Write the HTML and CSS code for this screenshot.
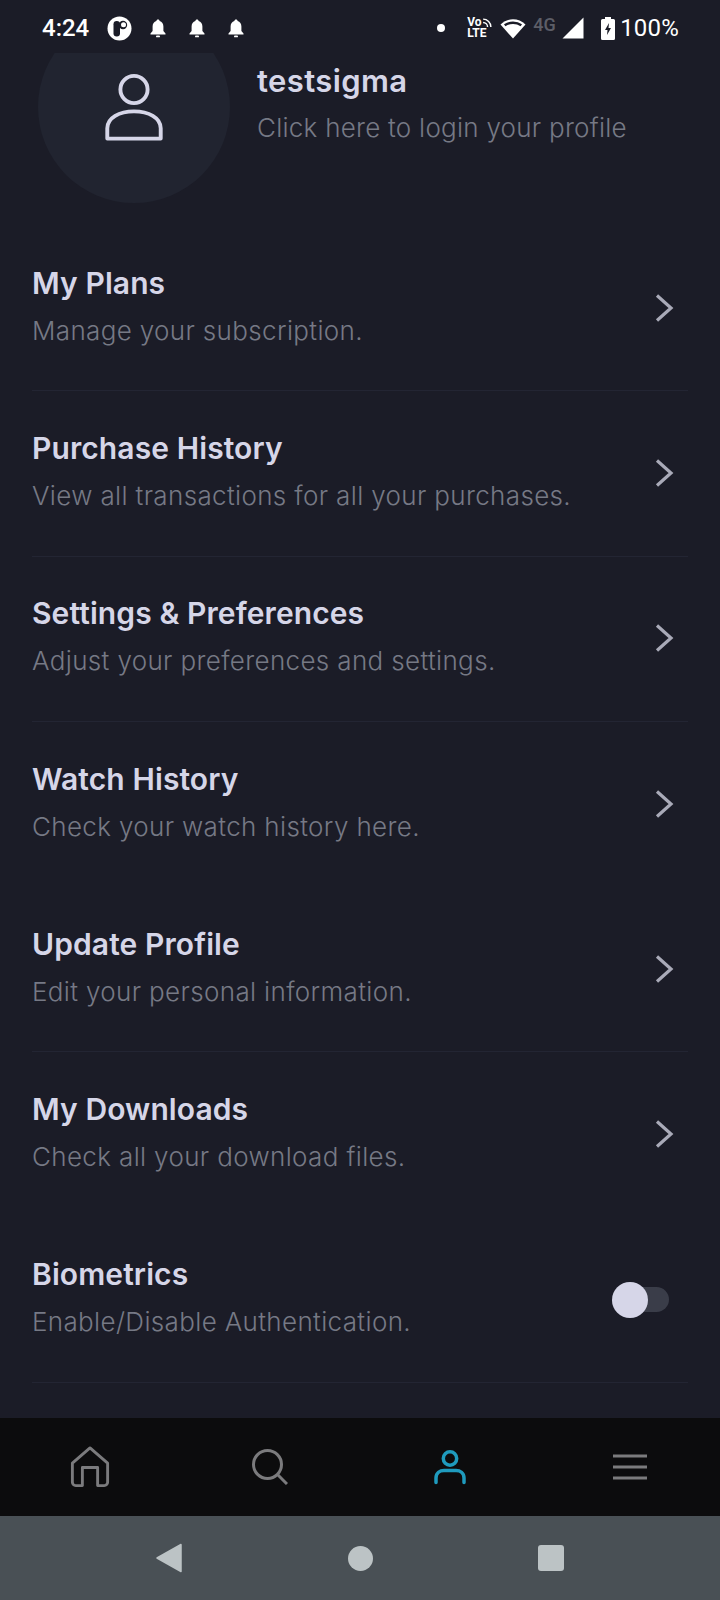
FILE: index.html
```html
<!DOCTYPE html>
<html lang="en">
<head>
  <meta charset="UTF-8">
  <meta name="viewport" content="width=device-width, initial-scale=1.0">
  <title>Profile</title>
  <link rel="stylesheet" href="styles.css">
</head>
<body>
  <div class="status-bar">
    <div class="status-left">
      <span class="clock">4:24</span>
      <svg class="app-badge" width="25" height="25" viewBox="0 0 25 25"><circle cx="12.5" cy="12.5" r="12" fill="#fff"/><rect x="6.500" y="5" width="6.500" height="15.500" rx="3.200" fill="#1b1c27"/><circle cx="16" cy="9" r="4.200" fill="#1b1c27"/><circle cx="16.500" cy="8.800" r="2.500" fill="#fff"/></svg>
      <svg class="bell" width="16" height="19" viewBox="0 0 16 19"><path d="M8 0.5c1 0 1.6 .7 1.6 1.6C12 2.900 13.400 5 13.400 7.500v4.500L15.500 14.500v1H.5v-1L2.600 12V7.500C2.600 5 4 2.900 6.400 2.100 6.400 1.200 7 .5 8 .5z" fill="#fff"/><rect x="6" y="16.500" width="4" height="1.800" rx=".9" fill="#fff"/></svg>
      <svg class="bell" width="16" height="19" viewBox="0 0 16 19"><path d="M8 0.5c1 0 1.6 .7 1.6 1.6C12 2.900 13.400 5 13.400 7.500v4.500L15.500 14.500v1H.5v-1L2.600 12V7.500C2.600 5 4 2.900 6.400 2.100 6.400 1.200 7 .5 8 .5z" fill="#fff"/><rect x="6" y="16.500" width="4" height="1.800" rx=".9" fill="#fff"/></svg>
      <svg class="bell" width="16" height="19" viewBox="0 0 16 19"><path d="M8 0.5c1 0 1.6 .7 1.6 1.6C12 2.900 13.400 5 13.400 7.500v4.500L15.500 14.500v1H.5v-1L2.600 12V7.500C2.600 5 4 2.900 6.400 2.100 6.400 1.200 7 .5 8 .5z" fill="#fff"/><rect x="6" y="16.500" width="4" height="1.800" rx=".9" fill="#fff"/></svg>
    </div>
    <div class="status-right">
      <span class="dot"></span>
      <span class="volte">
        <span class="volte-top">Vo<svg width="10" height="10" viewBox="0 0 9 9"><path d="M1 1a7 7 0 0 1 7 7M1 4a4 4 0 0 1 4 4" fill="none" stroke="#fff" stroke-width="1.300"/></svg></span>
        <span>LTE</span>
      </span>
      <svg class="wifi" width="26" height="22" viewBox="0 0 26 22"><path d="M13 21.500 .5 7.500C7.500 .5 18.500 .5 25.500 7.500z" fill="#fff"/><path d="M4.700 8.300C9.500 4.800 16.500 4.800 21.300 8.300" fill="none" stroke="#1b1c27" stroke-width="2.400"/></svg>
      <span class="net">4G</span>
      <svg class="signal" width="22" height="22" viewBox="0 0 22 22"><path d="M21.500 .5V21.500H.5z" fill="#fff"/></svg>
      <svg class="battery" width="14" height="23" viewBox="0 0 14 23"><path d="M4 0h6v2h2.500A1.500 1.500 0 0 1 14 3.500v18a1.500 1.500 0 0 1-1.500 1.500h-11A1.500 1.500 0 0 1 0 21.500v-18A1.500 1.500 0 0 1 1.500 2H4z" fill="#fff"/><path d="M8 6 4 13h2.500L6 18l4-7H7.500z" fill="#1b1c27"/></svg>
      <span class="percent">100%</span>
    </div>
  </div>

  <main class="content">
    <section class="profile">
      <div class="avatar">
        <svg width="62" height="68" viewBox="0 0 62 70" fill="none" stroke="#d6d6e8" stroke-width="4"><circle cx="31" cy="17" r="14"/><path d="M3.500 67.500V57C3.500 46 16 39.500 31 39.500S58.500 46 58.500 57V67.500z" stroke-linejoin="round"/></svg>
      </div>
      <div class="profile-text">
        <div class="profile-name">testsigma</div>
        <div class="profile-hint">Click here to login your profile</div>
      </div>
    </section>

    <ul class="menu">
      <li class="menu-row">
        <div class="menu-text"><div class="menu-title">My Plans</div><div class="menu-sub">Manage your subscription.</div></div>
        <svg class="chevron" width="20" height="30" viewBox="0 0 20 30"><path d="M3 2.500 17 15 3 27.500" fill="none" stroke="#a9aab8" stroke-width="3.200"/></svg>
      </li>
      <li class="menu-row">
        <div class="menu-text"><div class="menu-title">Purchase History</div><div class="menu-sub">View all transactions for all your purchases.</div></div>
        <svg class="chevron" width="20" height="30" viewBox="0 0 20 30"><path d="M3 2.500 17 15 3 27.500" fill="none" stroke="#a9aab8" stroke-width="3.200"/></svg>
      </li>
      <li class="menu-row">
        <div class="menu-text"><div class="menu-title">Settings &amp; Preferences</div><div class="menu-sub">Adjust your preferences and settings.</div></div>
        <svg class="chevron" width="20" height="30" viewBox="0 0 20 30"><path d="M3 2.500 17 15 3 27.500" fill="none" stroke="#a9aab8" stroke-width="3.200"/></svg>
      </li>
      <li class="menu-row no-line">
        <div class="menu-text"><div class="menu-title">Watch History</div><div class="menu-sub">Check your watch history here.</div></div>
        <svg class="chevron" width="20" height="30" viewBox="0 0 20 30"><path d="M3 2.500 17 15 3 27.500" fill="none" stroke="#a9aab8" stroke-width="3.200"/></svg>
      </li>
      <li class="menu-row">
        <div class="menu-text"><div class="menu-title">Update Profile</div><div class="menu-sub">Edit your personal information.</div></div>
        <svg class="chevron" width="20" height="30" viewBox="0 0 20 30"><path d="M3 2.500 17 15 3 27.500" fill="none" stroke="#a9aab8" stroke-width="3.200"/></svg>
      </li>
      <li class="menu-row no-line">
        <div class="menu-text"><div class="menu-title">My Downloads</div><div class="menu-sub">Check all your download files.</div></div>
        <svg class="chevron" width="20" height="30" viewBox="0 0 20 30"><path d="M3 2.500 17 15 3 27.500" fill="none" stroke="#a9aab8" stroke-width="3.200"/></svg>
      </li>
      <li class="menu-row">
        <div class="menu-text"><div class="menu-title">Biometrics</div><div class="menu-sub">Enable/Disable Authentication.</div></div>
        <div class="toggle"><span class="toggle-knob"></span></div>
      </li>
    </ul>
  </main>

  <nav class="tab-bar">
    <svg width="40" height="42" viewBox="0 0 42 44" fill="none" stroke="#7b7b7d" stroke-width="3" stroke-linejoin="round"><path d="M21 2 39.500 18V38A3.500 3.500 0 0 1 36 41.500H29V22.500H13V41.500H6A3.500 3.500 0 0 1 2.500 38V18z"/></svg>
    <svg width="36" height="36" viewBox="0 0 36 36" fill="none" stroke="#7b7b7d" stroke-width="3"><circle cx="15.500" cy="15.500" r="14"/><path d="M26 26 35 35"/></svg>
    <svg width="32" height="36" viewBox="0 0 32 36" fill="none" stroke="#1f9bbd" stroke-width="3.500" stroke-linecap="round"><circle cx="16" cy="9.500" r="6.700"/><path d="M2 33.500V29C2 24 6 21.500 10 21.500H22C26 21.500 30 24 30 29V33.500"/></svg>
    <svg width="34" height="26" viewBox="0 0 34 26" fill="none" stroke="#7b7b7d" stroke-width="3"><path d="M0 2H34M0 13H34M0 24H34"/></svg>
  </nav>

  <div class="system-nav">
    <svg width="26" height="30" viewBox="0 0 26 30"><path d="M25 1.500V28.500L1 15z" fill="#bcc3c5" stroke="#bcc3c5" stroke-width="1.500" stroke-linejoin="round"/></svg>
    <span class="sys-circle"></span>
    <span class="sys-square"></span>
  </div>
</body>
</html>
```

FILE: styles.css
```css
* {
  box-sizing: border-box;
}
body {
  margin: 0;
  width: 720px;
  height: 1600px;
  overflow: hidden;
  display: flex;
  flex-direction: column;
  background: #1b1c27;
  font-family: Inter, "Noto Sans", sans-serif;
}
.status-bar {
  height: 53px;
  flex: none;
  padding: 12px 41px 0 42px;
  display: flex;
  justify-content: space-between;
  align-items: flex-start;
  color: #fff;
  position: relative;
  z-index: 2;
  background: #1b1c27;
}
.status-left {
  display: flex;
  align-items: center;
  height: 32px;
}
.clock {
  font-family: Roboto, sans-serif;
  font-weight: 500;
  font-size: 24px;
  width: 65px;
}
.app-badge {
  margin-right: 18px;
}
.bell {
  margin-right: 23px;
}
.status-right {
  display: flex;
  align-items: center;
  height: 32px;
}
.dot {
  width: 8px;
  height: 8px;
  border-radius: 50%;
  background: #fff;
  margin-right: 22px;
}
.volte {
  display: flex;
  flex-direction: column;
  font-family: Roboto, sans-serif;
  font-weight: 700;
  font-size: 12px;
  line-height: 11px;
  width: 33px;
}
.volte-top {
  display: flex;
  align-items: center;
}
.net {
  font-family: Roboto, sans-serif;
  font-weight: 500;
  font-size: 18px;
  color: #5d5e67;
  margin: -8px 0 0 7px;
  width: 24px;
}
.signal {
  margin-left: 5px;
}
.battery {
  margin-left: 17px;
}
.percent {
  font-family: Roboto, sans-serif;
  font-weight: 400;
  font-size: 24px;
  letter-spacing: 0.2px;
  margin-left: 5px;
}
.content {
  flex: 1;
  overflow: hidden;
  padding: 0 32px 0 32px;
}
.profile {
  display: flex;
  margin-top: -42px;
}
.avatar {
  width: 192px;
  height: 192px;
  margin-left: 6px;
  border-radius: 50%;
  background: #212430;
  display: flex;
  align-items: center;
  justify-content: center;
  flex: none;
}
.profile-text {
  margin: 52px 0 0 27px;
}
.profile-name {
  font-size: 31px;
  font-weight: 600;
  letter-spacing: 0.4px;
  line-height: 36px;
  color: #d6d6e8;
}
.profile-hint {
  font-size: 26px;
  font-weight: 300;
  letter-spacing: 0.25px;
  line-height: 36px;
  margin-top: 11px;
  color: #767985;
}
.menu {
  list-style: none;
  margin: 23px 0 0;
  padding: 0;
}
.menu-row {
  height: 165.3px;
  display: flex;
  justify-content: space-between;
  align-items: center;
  border-bottom: 1px solid #232533;
  padding-right: 14px;
}
.menu-row.no-line {
  border-bottom-color: transparent;
}
.menu-text {
  padding-bottom: 4px;
}
.menu-title {
  font-size: 30px;
  font-weight: 600;
  letter-spacing: 0.1px;
  line-height: 38px;
  color: #d6d6e8;
}
.menu-sub {
  font-size: 26px;
  font-weight: 300;
  letter-spacing: 0.35px;
  line-height: 36px;
  margin-top: 11px;
  color: #767985;
}
.chevron {
  margin-top: -1px;
}
.toggle {
  width: 57px;
  height: 25px;
  border-radius: 13px;
  background: #3a3d49;
  position: relative;
  margin-right: 5px;
}
.toggle-knob {
  position: absolute;
  left: 0;
  top: -5px;
  width: 36px;
  height: 36px;
  border-radius: 50%;
  background: #d6d6e8;
}
.tab-bar {
  height: 98px;
  flex: none;
  background: #0c0c0d;
  display: grid;
  grid-template-columns: repeat(4, 180px);
  justify-items: center;
  align-items: center;
}
.system-nav {
  height: 84px;
  flex: none;
  background: #495055;
  display: grid;
  grid-template-columns: repeat(3, 191px);
  justify-content: center;
  justify-items: center;
  align-items: center;
}
.sys-circle {
  width: 25px;
  height: 25px;
  border-radius: 50%;
  background: #bcc3c5;
}
.sys-square {
  width: 26px;
  height: 26px;
  border-radius: 3px;
  background: #bcc3c5;
}
```
